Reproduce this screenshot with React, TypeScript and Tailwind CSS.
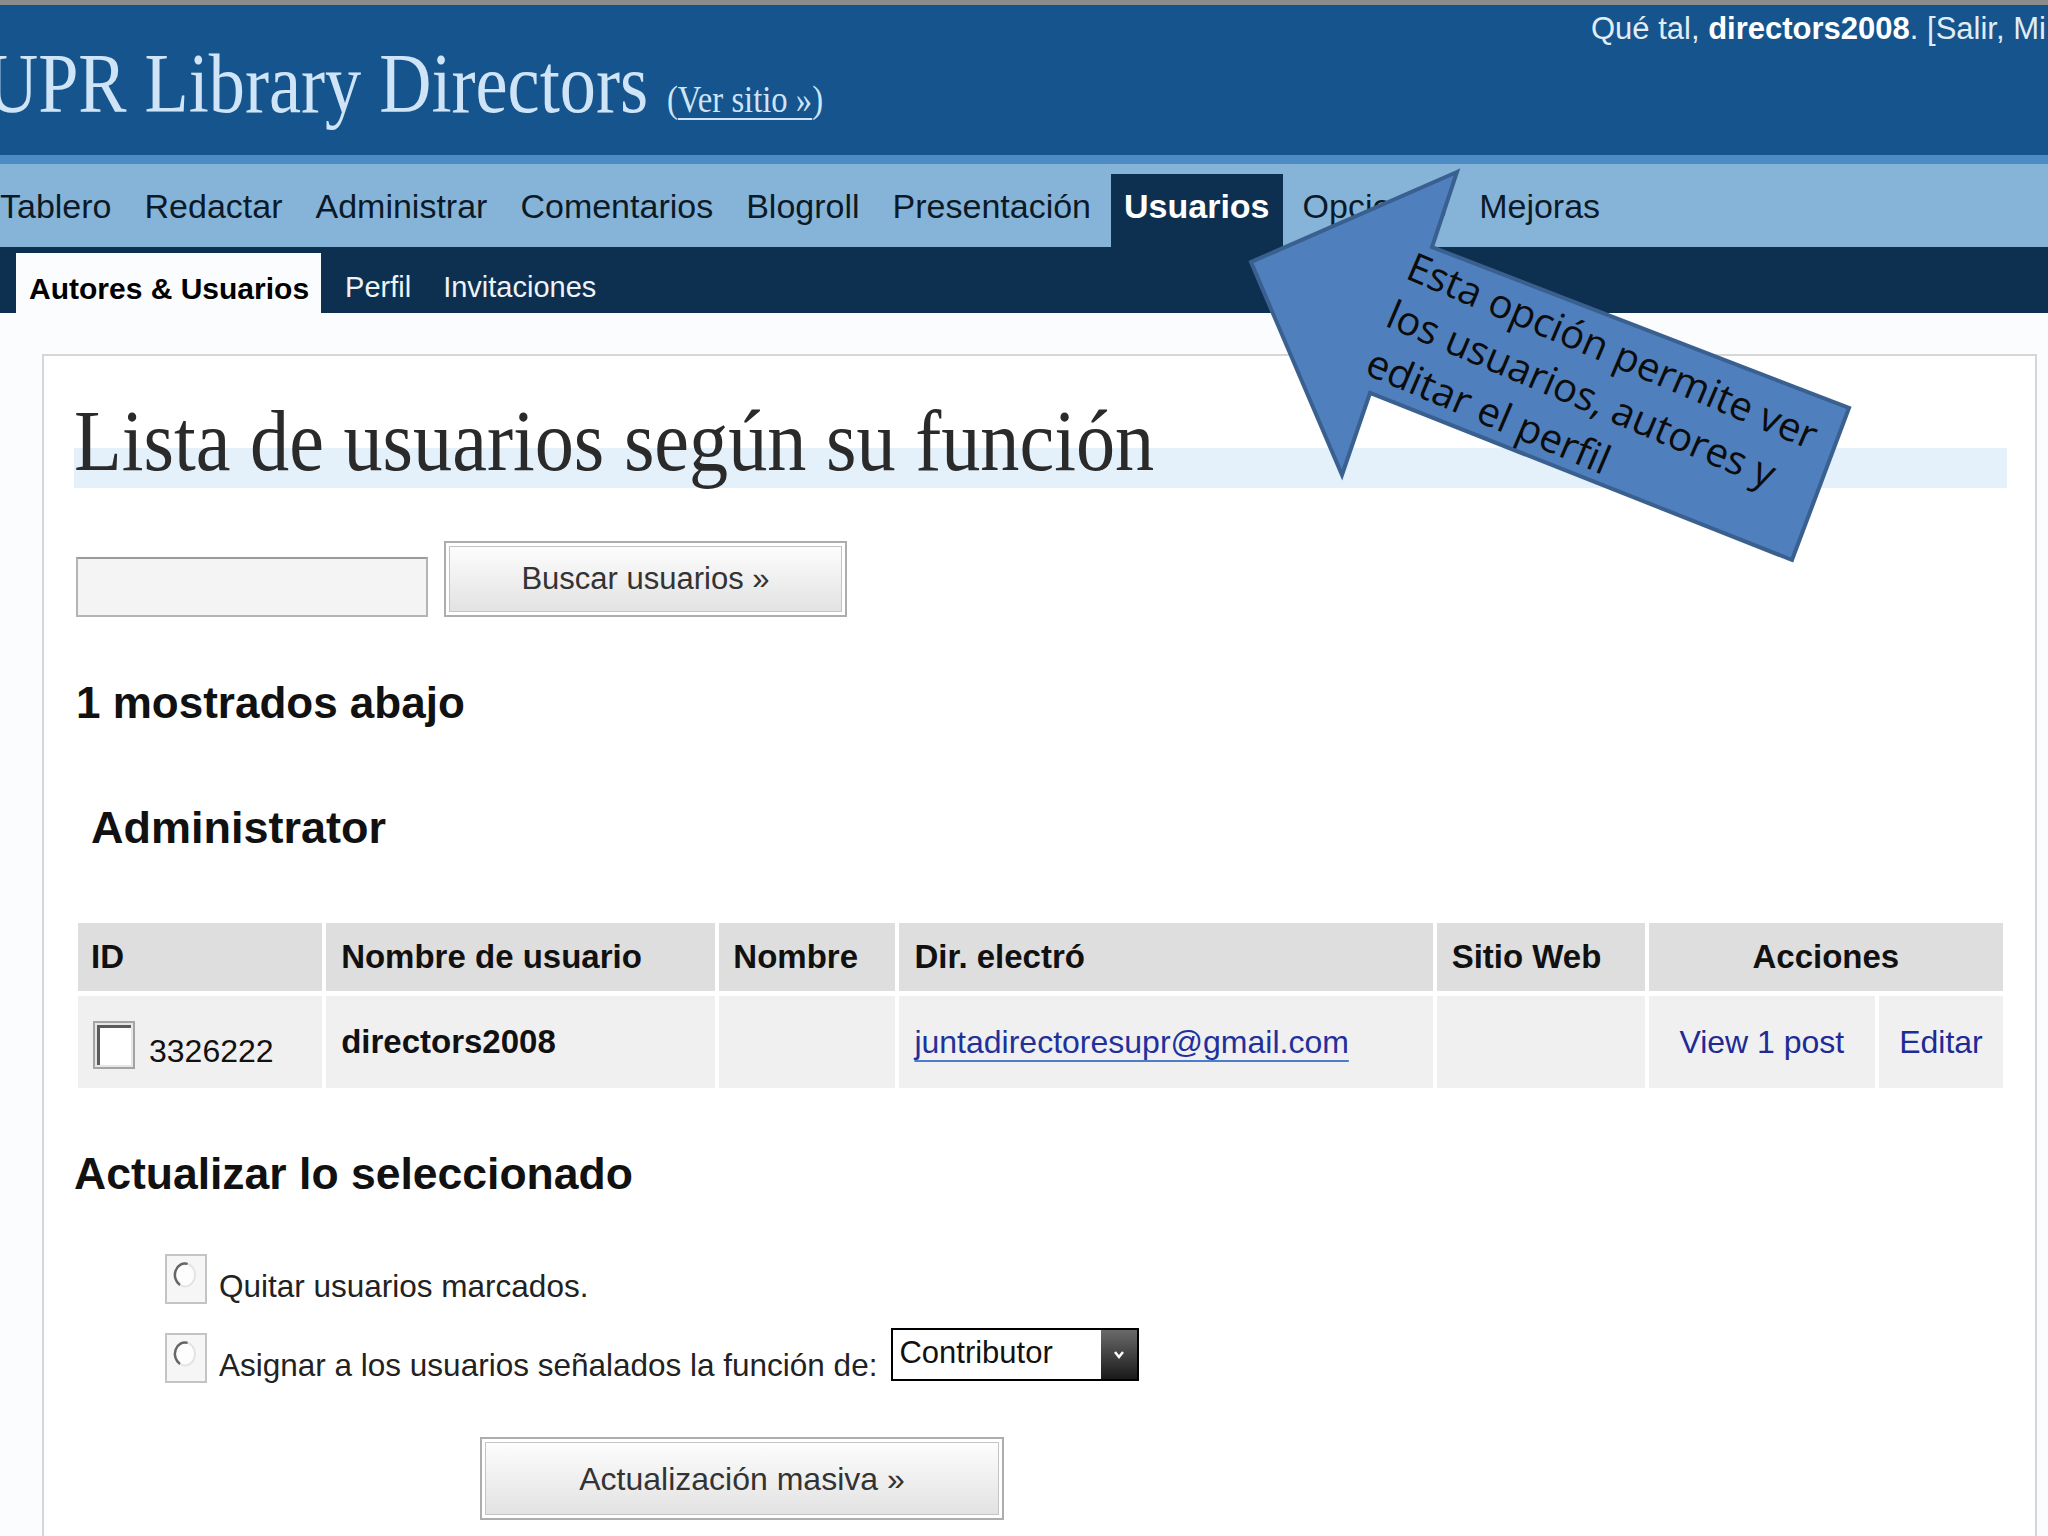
import React from 'react';

const navItems = ['Tablero', 'Redactar', 'Administrar', 'Comentarios', 'Blogroll', 'Presentación', 'Usuarios', 'Opciones', 'Mejoras'];

const Radio = () => (
    <div className="w-[42px] h-[50px] border-2 border-[#c4c4c4] bg-[#f6f6f6] flex justify-center pt-[5px] shrink-0">
        <svg width="28" height="30" viewBox="0 0 28 30">
            <ellipse cx="13" cy="14" rx="10" ry="11.5" fill="#fdfdfd" stroke="#e4e4e4" strokeWidth="2" />
            <path d="M 8 24 A 10 11.5 0 0 1 15.6 2.9" fill="none" stroke="#666" strokeWidth="2.5" />
        </svg>
    </div>
);

const Checkbox = () => (
    <div className="w-[42px] h-[48px] border-2 border-[#a4a4a4] bg-[#e6e6e6] p-[2px] shrink-0">
        <div className="w-full h-full bg-white border-t-[3px] border-l-[3px] border-[#5a5a5a]" />
    </div>
);

export default function App() {
    return (
        <div className="relative w-[2048px] h-[1536px] overflow-hidden bg-[#fafcfe] font-['Liberation_Sans',Arial,sans-serif]">
            <div className="h-[5px] bg-[#8c8c8c]" />

            {/* header */}
            <div className="relative h-[150px] bg-[#15548d] pt-[34px]">
                <div className="absolute right-0 top-[6px] w-[457px] overflow-hidden whitespace-nowrap text-[31px] leading-[36px] text-[#e2ecf5]">
                    Qué tal, <span className="font-bold text-white">directors2008</span>. [Salir, Mi perfil]
                </div>
                <div className="flex items-baseline -ml-[14px] origin-left scale-x-[0.86] font-['Liberation_Serif',serif] text-[#cfe4f6]">
                    <h1 className="text-[84px] leading-[90px] whitespace-nowrap">UPR Library Directors</h1>
                    <span className="ml-[22px] text-[38px] whitespace-nowrap">
                        (<span className="underline decoration-2 underline-offset-[6px]">Ver sitio »</span>)
                    </span>
                </div>
            </div>
            <div className="h-[9px] bg-[#4c8bc3]" />

            {/* main menu */}
            <div className="h-[83px] bg-[#86b4d9] flex items-end gap-[7px] -ml-[13px] text-[34px]">
                {navItems.map(item => (
                    <div
                        key={item}
                        className={item === 'Usuarios'
                            ? 'h-[73px] pb-[8px] px-[13px] flex items-center bg-[#0d3050] text-white font-bold'
                            : 'h-[73px] pb-[8px] px-[13px] flex items-center text-[#0c1a28]'}
                    >
                        {item}
                    </div>
                ))}
            </div>

            {/* sub menu */}
            <div className="h-[66px] bg-[#0d3050] flex items-end text-[29px] text-[#eef3f8]">
                <div className="ml-[16px] h-[60px] pl-[13px] pr-[12px] pt-[10px] flex items-center bg-[#fafcfe] text-black font-bold text-[30px]">
                    Autores &amp; Usuarios
                </div>
                <div className="h-[60px] pt-[10px] flex items-center ml-[24px]">Perfil</div>
                <div className="h-[60px] pt-[10px] flex items-center ml-[32px]">Invitaciones</div>
            </div>

            {/* content box */}
            <div className="ml-[42px] mt-[41px] w-[1995px] h-[1200px] border-2 border-b-0 border-[#d6d6d6] bg-white pl-[30px] pr-[28px]">
                <h2 className="mt-[41px] h-[91px] leading-[88px] bg-[linear-gradient(to_bottom,transparent_56%,#e4f0fa_56%)] font-['Liberation_Serif',serif] text-[86px] text-[#2a2a2a] whitespace-nowrap">
                    <span className="inline-block origin-left scale-x-[0.91]">Lista de usuarios según su función</span>
                </h2>

                <div className="mt-[53px] ml-[2px] flex items-end">
                    <div className="w-[352px] h-[60px] border-2 border-[#b4b4b4] border-t-[#9a9a9a] bg-[#f4f4f4]" />
                    <button className="ml-[16px] w-[403px] h-[76px] border-2 border-[#adadad] bg-white p-[3px]">
                        <div className="w-full h-full border border-[#c4c4c4] bg-[linear-gradient(to_bottom,#fdfdfd,#e2e2e2)] flex items-center justify-center text-[31px] text-[#333]">
                            Buscar usuarios »
                        </div>
                    </button>
                </div>

                <h3 className="mt-[61px] ml-[2px] text-[44px] leading-[50px] font-bold text-[#111]">1 mostrados abajo</h3>
                <h3 className="mt-[75px] ml-[17px] text-[45px] leading-[50px] font-bold text-[#111]">Administrator</h3>

                <table className="mt-[65px] w-full table-fixed border-separate border-spacing-x-[4px] border-spacing-y-[5px] text-[32px] text-[#111]">
                    <colgroup>
                        <col className="w-[244px]" />
                        <col className="w-[389px]" />
                        <col className="w-[176px]" />
                        <col className="w-[533px]" />
                        <col className="w-[208px]" />
                        <col className="w-[226px]" />
                        <col className="w-[124px]" />
                    </colgroup>
                    <thead>
                        <tr className="h-[68px] bg-[#dedede] font-bold text-[33px]">
                            <th className="text-left px-[13px]">ID</th>
                            <th className="text-left px-[15px]">Nombre de usuario</th>
                            <th className="text-left px-[14px]">Nombre</th>
                            <th className="text-left px-[15px]">Dir. electró</th>
                            <th className="text-left px-[15px]">Sitio Web</th>
                            <th colSpan={2} className="text-center">Acciones</th>
                        </tr>
                    </thead>
                    <tbody>
                        <tr className="h-[92px] bg-[#f0f0f1]">
                            <td className="px-[15px]">
                                <div className="flex items-end gap-[14px] pt-[6px]">
                                    <Checkbox />
                                    <span className="leading-[36px]">3326222</span>
                                </div>
                            </td>
                            <td className="px-[15px] font-bold text-[33px]">directors2008</td>
                            <td />
                            <td className="px-[15px]">
                                <span className="text-[#22309c] underline decoration-2 decoration-[#4c7cca] underline-offset-[7px]">juntadirectoresupr@gmail.com</span>
                            </td>
                            <td />
                            <td className="text-center text-[#1e2a96]">View 1 post</td>
                            <td className="text-center text-[#1e2a96]">Editar</td>
                        </tr>
                    </tbody>
                </table>

                <h3 className="mt-[56px] text-[44.5px] leading-[50px] font-bold text-[#111]">Actualizar lo seleccionado</h3>

                <div className="mt-[55px] ml-[91px] flex items-end gap-[12px] text-[31.5px] text-[#222]">
                    <Radio />
                    <span className="leading-[40px] -mb-[2px]">Quitar usuarios marcados.</span>
                </div>
                <div className="mt-[24px] ml-[91px] flex items-end text-[31.5px] text-[#222]">
                    <Radio />
                    <span className="ml-[12px] leading-[40px] -mb-[2px]">Asignar a los usuarios señalados la función de:</span>
                    <div className="ml-[14px] mb-[2px] w-[248px] h-[53px] border-2 border-black bg-white flex">
                        <span className="flex-1 pl-[6px] leading-[46px] text-[31px] text-[#111]">Contributor</span>
                        <div className="w-[36px] h-full bg-[linear-gradient(to_bottom,#6a6a6a,#1a1a1a)] flex items-center justify-center">
                            <svg width="12" height="10" viewBox="0 0 12 10">
                                <polyline points="2,2 6,7 10,2" fill="none" stroke="white" strokeWidth="2.5" />
                            </svg>
                        </div>
                    </div>
                </div>

                <button className="mt-[54px] ml-[406px] w-[524px] h-[83px] border-2 border-[#adadad] bg-white p-[3px]">
                    <div className="w-full h-full border border-[#c4c4c4] bg-[linear-gradient(to_bottom,#fdfdfd,#e2e2e2)] flex items-center justify-center text-[32px] text-[#333]">
                        Actualización masiva »
                    </div>
                </button>
            </div>

            {/* callout arrow */}
            <svg className="absolute inset-0 pointer-events-none" width="2048" height="1536" viewBox="0 0 2048 1536">
                <polygon
                    points="1457,172 1251,262 1342,475 1370,393 1792,560 1849,408 1432,247"
                    fill="#4f80bd"
                    stroke="#39608f"
                    strokeWidth="4"
                    strokeLinejoin="miter"
                />
            </svg>
            <div className="absolute left-[1420px] top-[240px] origin-top-left rotate-[23deg] whitespace-nowrap font-['Open_Sans',sans-serif] text-[40px] leading-[52px] text-[#0c0c0c] pointer-events-none">
                <div>Esta opción permite ver</div>
                <div>los usuarios, autores y</div>
                <div>editar el perfil</div>
            </div>
        </div>
    );
}
